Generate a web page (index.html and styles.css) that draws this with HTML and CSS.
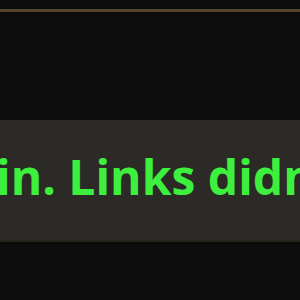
FILE: index.html
```html
<!DOCTYPE html>
<html lang="en">
<head>
    <meta charset="UTF-8">
    <meta name="viewport" content="width=device-width, initial-scale=1.0">
    <title>Notice</title>
    <link rel="stylesheet" href="styles.css">
</head>
<body>
    <div class="frame">
        <div class="top-space"></div>
        <div class="banner">
            <p class="banner-text">in. Links didn't work</p>
        </div>
        <div class="bottom-space"></div>
    </div>
</body>
</html>
```

FILE: styles.css
```css
body {
    margin: 0;
    background-color: #0c0c0c;
    font-family: "Open Sans", "Lato", sans-serif;
    height: 300px;
    overflow: hidden;
}

.frame {
    margin-top: 9px;
    border-top: 3px solid #51442a;
}

.top-space {
    height: 108px;
}

.banner {
    background-color: #2b2a27;
    height: 87px;
    padding-top: 33px;
    overflow: hidden;
    border-bottom: 2px solid #27231a;
}

.banner-text {
    margin: 0 0 0 -4px;
    white-space: nowrap;
    color: #3ef03e;
    font-size: 48px;
    font-weight: 700;
    line-height: 48px;
}
```
